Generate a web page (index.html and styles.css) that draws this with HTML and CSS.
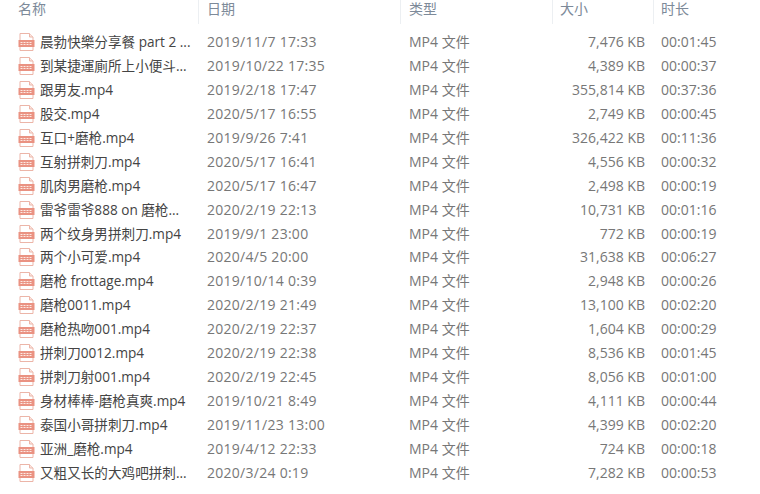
FILE: index.html
```html
<!DOCTYPE html>
<html lang="zh">
<head>
  <meta charset="UTF-8">
  <title>文件列表</title>
  <link rel="stylesheet" href="styles.css">
</head>
<body>
  <svg width="0" height="0" class="defs">
    <symbol id="mp4" viewBox="0 0 16 18">
      <path d="M1.500 .5H11L14.500 4V17.500H1.500Z" fill="#fff" stroke="#ecb5a8"/>
      <path d="M11 .5V4H14.500" fill="#fbe6e0" stroke="#ecb5a8"/>
      <rect x="0" y="7" width="16" height="7" fill="#ea9282"/>
      <path d="M2 9.500h12M2 11.500h12" stroke="#fde9e3" stroke-width="1" stroke-dasharray="2 1"/>
    </symbol>
  </svg>

  <div class="head">
    <div class="col name">名称</div>
    <div class="col date">日期</div>
    <div class="col type">类型</div>
    <div class="col size">大小</div>
    <div class="col time">时长</div>
  </div>

  <div class="list" id="list"></div>

  <script>
    const files = [
      ['晨勃快樂分享餐 part 2 ...', '2019/11/7 17:33', '7,476 KB', '00:01:45'],
      ['到某捷運廁所上小便斗...', '2019/10/22 17:35', '4,389 KB', '00:00:37'],
      ['跟男友.mp4', '2019/2/18 17:47', '355,814 KB', '00:37:36'],
      ['股交.mp4', '2020/5/17 16:55', '2,749 KB', '00:00:45'],
      ['互口+磨枪.mp4', '2019/9/26 7:41', '326,422 KB', '00:11:36'],
      ['互射拼刺刀.mp4', '2020/5/17 16:41', '4,556 KB', '00:00:32'],
      ['肌肉男磨枪.mp4', '2020/5/17 16:47', '2,498 KB', '00:00:19'],
      ['雷爷雷爷888 on 磨枪...', '2020/2/19 22:13', '10,731 KB', '00:01:16'],
      ['两个纹身男拼刺刀.mp4', '2019/9/1 23:00', '772 KB', '00:00:19'],
      ['两个小可爱.mp4', '2020/4/5 20:00', '31,638 KB', '00:06:27'],
      ['磨枪 frottage.mp4', '2019/10/14 0:39', '2,948 KB', '00:00:26'],
      ['磨枪0011.mp4', '2020/2/19 21:49', '13,100 KB', '00:02:20'],
      ['磨枪热吻001.mp4', '2020/2/19 22:37', '1,604 KB', '00:00:29'],
      ['拼刺刀0012.mp4', '2020/2/19 22:38', '8,536 KB', '00:01:45'],
      ['拼刺刀射001.mp4', '2020/2/19 22:45', '8,056 KB', '00:01:00'],
      ['身材棒棒-磨枪真爽.mp4', '2019/10/21 8:49', '4,111 KB', '00:00:44'],
      ['泰国小哥拼刺刀.mp4', '2019/11/23 13:00', '4,399 KB', '00:02:20'],
      ['亚洲_磨枪.mp4', '2019/4/12 22:33', '724 KB', '00:00:18'],
      ['又粗又长的大鸡吧拼刺...', '2020/3/24 0:19', '7,282 KB', '00:00:53']
    ];

    const list = document.getElementById('list');
    for (const f of files) {
      const row = document.createElement('div');
      row.className = 'row';
      row.innerHTML = `
        <div class="cell name"><svg class="icon"><use href="#mp4"></use></svg><span>${f[0]}</span></div>
        <div class="cell date">${f[1]}</div>
        <div class="cell type">MP4 文件</div>
        <div class="cell size">${f[2]}</div>
        <div class="cell time">${f[3]}</div>
      `;
      list.appendChild(row);
    }
  </script>
</body>
</html>
```

FILE: styles.css
```css
html, body {
  margin: 0;
  height: 494px;
  overflow: hidden;
}
body {
  background-color: #fff;
  font-family: "Open Sans", "Noto Sans CJK SC", sans-serif;
  font-size: 14px;
  color: #777;
}
.defs {
  display: block;
  height: 0;
}
.head, .row {
  display: grid;
  grid-template-columns: 199px 202px 152px 101px 106px;
}
.head {
  height: 24px;
  margin-bottom: 6px;
}
.col {
  border-right: 1px solid #eceff2;
  padding-left: 8px;
  line-height: 17px;
  color: #7d8a99;
  font-size: 14px;
}
.col.name {
  padding-left: 18px;
}
.col.time {
  border-right: none;
  padding-left: 7px;
}
.col.size {
  padding-left: 7px;
}
.row {
  height: 23.95px;
  line-height: 24px;
}
.cell {
  padding-left: 8px;
  white-space: nowrap;
}
.cell.name {
  display: flex;
  align-items: center;
  gap: 5px;
  padding-left: 18px;
  font-size: 13.6px;
  color: #444;
}
.cell.date {
  letter-spacing: 0.27px;
}
.cell.size {
  text-align: right;
  padding: 0 9px 0 0;
}
.cell.time {
  padding-left: 7px;
}
.icon {
  width: 17px;
  height: 18px;
  flex: none;
}
```
